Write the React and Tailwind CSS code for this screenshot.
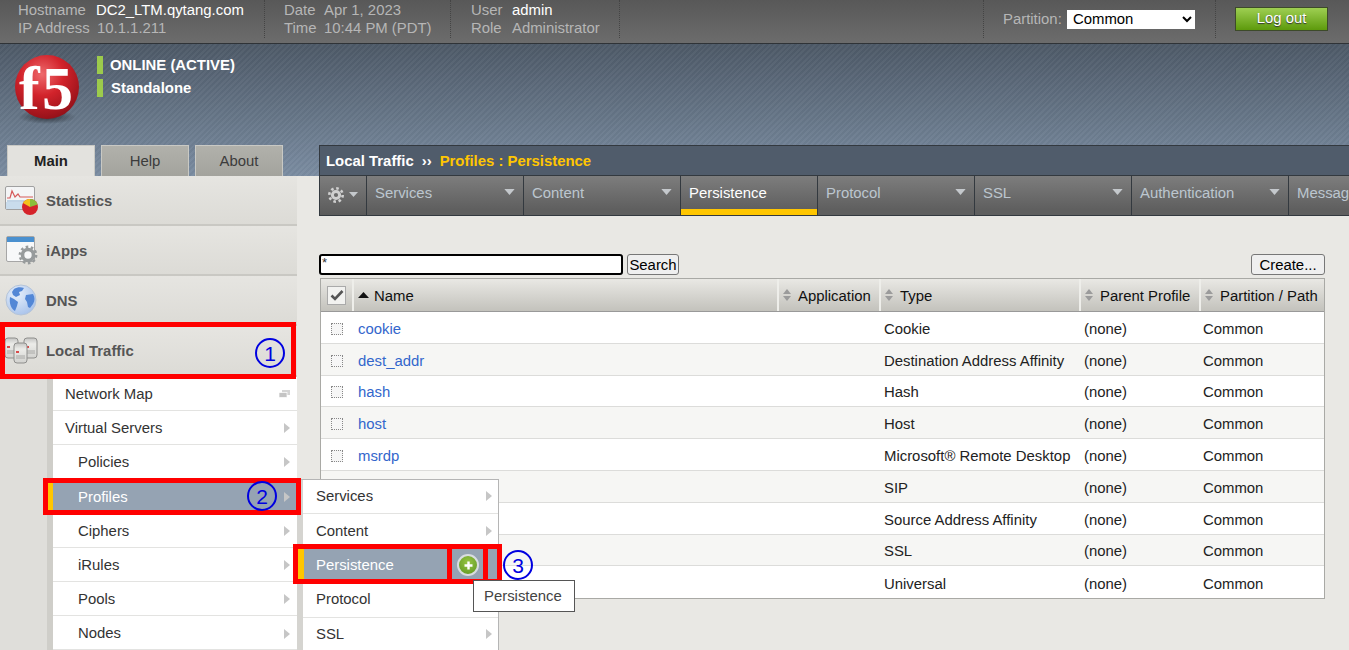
import React from "react";

const FONT = "font-['Liberation_Sans',Arial,sans-serif]";

function Caret({ className = "" }) {
  return (
    <svg width="12" height="7" viewBox="0 0 12 7" className={className}>
      <path d="M0 0h12L6 7z" fill="#c4c8cc" />
    </svg>
  );
}

function Arrow() {
  return (
    <svg width="7" height="10" viewBox="0 0 7 10" className="shrink-0">
      <path d="M1 0l6 5-6 5z" fill="#c6c6c6" />
    </svg>
  );
}

function SortIcon() {
  return (
    <svg width="10" height="12" viewBox="0 0 10 12" className="shrink-0">
      <path d="M5 0l4 5H1z" fill="#9b9b9b" />
      <path d="M5 12L1 7h8z" fill="#9b9b9b" />
    </svg>
  );
}

function F5Logo() {
  return (
    <svg width="68" height="70" viewBox="0 0 68 70">
      <defs>
        <radialGradient id="f5r" cx="0.42" cy="0.3" r="0.75">
          <stop offset="0" stopColor="#ee6a6c" />
          <stop offset="0.45" stopColor="#d2232b" />
          <stop offset="1" stopColor="#8e0f17" />
        </radialGradient>
        <radialGradient id="f5s" cx="0.5" cy="0.5" r="0.5">
          <stop offset="0" stopColor="#1c2025" stopOpacity="0.75" />
          <stop offset="1" stopColor="#1c2025" stopOpacity="0" />
        </radialGradient>
      </defs>
      <ellipse cx="33" cy="62" rx="29" ry="7" fill="url(#f5s)" />
      <circle cx="33" cy="32" r="32" fill="url(#f5r)" />
      <text x="5" y="54" fontFamily="'Liberation Serif',serif" fontWeight="700" fontSize="62" fill="#fff">f</text>
      <text x="28" y="54" fontFamily="'Liberation Serif',serif" fontWeight="700" fontSize="62" fill="#fff">5</text>
    </svg>
  );
}

function StatsIcon() {
  return (
    <svg width="34" height="30" viewBox="0 0 34 30">
      <rect x="1.5" y="1.5" width="29" height="23" rx="1.5" fill="#f4f5f6" stroke="#a0a0a0" />
      <rect x="2" y="17" width="28" height="7" fill="#c9dcec" />
      <path d="M3 13h3l2-7 3 6 3-3 2 3h13" fill="none" stroke="#d65a5a" strokeWidth="1.2" />
      <path d="M3 16h26" stroke="#8fb4d6" strokeWidth="1" />
      <circle cx="26" cy="22" r="8" fill="#d5232a" />
      <path d="M26 22V14a8 8 0 0 1 7.6 5.5z" fill="#8bbf3a" />
      <path d="M26 22l-7-3.9A8 8 0 0 1 26 14z" fill="#f3c21c" />
    </svg>
  );
}

function IAppsIcon() {
  return (
    <svg width="34" height="30" viewBox="0 0 34 30">
      <rect x="2.5" y="1.5" width="28" height="25" rx="1.5" fill="#f7f8f9" stroke="#a6a6a6" />
      <rect x="3" y="2" width="27" height="5" fill="#4a90cf" />
      <circle cx="24" cy="20" r="5.5" fill="none" stroke="#979b9c" strokeWidth="3.6" />
      <circle cx="24" cy="20" r="8.2" fill="none" stroke="#979b9c" strokeWidth="2.4" strokeDasharray="2.6 2.55" />
    </svg>
  );
}

function GlobeIcon() {
  return (
    <svg width="32" height="32" viewBox="0 0 32 32">
      <defs>
        <radialGradient id="gl" cx="0.35" cy="0.3" r="0.8">
          <stop offset="0" stopColor="#e6effb" />
          <stop offset="1" stopColor="#a5c0ea" />
        </radialGradient>
      </defs>
      <circle cx="16" cy="16" r="15" fill="url(#gl)" stroke="#b5c4d8" />
      <path d="M9 5c3-2 7-2 10-1l-2 3-3 1 1 3-4 2-3-2-1-3zM21 11l7-1c2 3 2 7 0 10l-3 4-2-1-1-5-2-3zM5 13l4 2 4 3-1 4-2 5c-4-2-6-8-5-14z" fill="#5387d6" />
    </svg>
  );
}

function ServersIcon() {
  return (
    <svg width="34" height="28" viewBox="0 0 34 28">
      <defs>
        <linearGradient id="srv" x1="0" y1="0" x2="0" y2="1">
          <stop offset="0" stopColor="#c4c4c2" />
          <stop offset="0.3" stopColor="#ecece9" />
          <stop offset="1" stopColor="#d2d2cf" />
        </linearGradient>
      </defs>
      {[[1, 1], [20, 1], [10, 6]].map(([x, y], i) => (
        <g key={i}>
          <rect x={x} y={y} width="13" height="20" rx="3" fill="url(#srv)" stroke="#8f8f8d" />
          <rect x={x + 2} y={y + 8} width="3" height="2" fill="#d84a4a" />
          <path d={`M${x + 2} ${y + 13}h9M${x + 2} ${y + 15}h9`} stroke="#a8a8a6" />
        </g>
      ))}
    </svg>
  );
}

function TopBar() {
  const label = "text-[#b6b6b6]";
  return (
    <div className="flex h-[44px] items-stretch border-b border-[#2f3337] bg-[linear-gradient(#585858,#6c6c6c)] pb-[5px] text-[14.9px] leading-[18px]">
      <div className="w-[265px] border-r border-dotted border-[#444] pl-[18px] pt-[1px]">
        <div className="flex"><span className={`w-[78px] ${label}`}>Hostname</span><span className="text-white">DC2_LTM.qytang.com</span></div>
        <div className="flex"><span className={`w-[79px] ${label}`}>IP Address</span><span className={label}>10.1.1.211</span></div>
      </div>
      <div className="w-[186px] border-r border-dotted border-[#444] pl-[19px] pt-[1px]">
        <div className="flex"><span className={`w-[40px] ${label}`}>Date</span><span className={label}>Apr 1, 2023</span></div>
        <div className="flex"><span className={`w-[40px] ${label}`}>Time</span><span className={label}>10:44 PM (PDT)</span></div>
      </div>
      <div className="w-[169px] border-r border-dotted border-[#444] pl-[20px] pt-[1px]">
        <div className="flex"><span className={`w-[41px] ${label}`}>User</span><span className="text-white">admin</span></div>
        <div className="flex"><span className={`w-[41px] ${label}`}>Role</span><span className={label}>Administrator</span></div>
      </div>
      <div className="flex-1 border-r border-dotted border-[#444]" style={{ maxWidth: 364 }} />
      <div className="flex w-[232px] items-center border-r border-dotted border-[#444] pl-[19px]">
        <span className={`w-[64px] whitespace-nowrap ${label}`}>Partition:</span>
        <select className="h-[19px] w-[128px] bg-white pl-[2px] text-[14.9px] text-black" defaultValue="Common">
          <option>Common</option>
        </select>
      </div>
      <div className="flex items-center pl-[19px]">
        <div className="flex h-[24px] w-[93px] items-center justify-center border border-[#3d4a2a] bg-[linear-gradient(#9ecf52,#5d9a0c)] pb-[2px] text-white [text-shadow:0_1px_1px_#333]">Log out</div>
      </div>
    </div>
  );
}

function Tab({ children, active }) {
  return (
    <div className={`flex h-[31px] w-[88px] items-center justify-center border-t border-x border-[#c9c9c4] text-[14.9px] ${active ? "bg-[#e3e2de] font-bold text-[#222]" : "bg-[linear-gradient(#b1b1ab,#a3a39d)] text-[#3c3c3c]"}`}>
      {children}
    </div>
  );
}

function Banner() {
  return (
    <div className="flex h-[132px] flex-col justify-between bg-[repeating-linear-gradient(135deg,rgba(255,255,255,0.035)_0_2px,rgba(0,0,0,0.02)_2px_4px),linear-gradient(#4d5967,#7a8ca1)]">
      <div className="flex pl-[14px] pt-[11px]">
        <F5Logo />
        <div className="ml-[15px] flex flex-col gap-[4px] text-[14.9px] font-bold leading-[18px] text-white">
          <div className="flex items-center gap-[7px]"><span className="h-[18px] w-[6px] bg-[#9ccb4c]" /><span className="pt-[1px]">ONLINE (ACTIVE)</span></div>
          <div className="flex items-center gap-[8px]"><span className="h-[18px] w-[6px] bg-[#9ccb4c]" /><span className="pt-[1px]">Standalone</span></div>
        </div>
      </div>
      <div className="flex items-end">
        <div className="flex w-[319px] gap-[6px] pl-[7px]">
          <Tab active>Main</Tab>
          <Tab>Help</Tab>
          <Tab>About</Tab>
        </div>
        <div className="flex h-[31px] flex-1 items-center gap-[8px] border-y border-l border-[#33393f] bg-[#505c6b] pl-[6px] pt-[2px] text-[14.9px] font-bold text-white">
          <span>Local Traffic</span>
          <span>››</span>
          <span className="text-[#ffc600]">Profiles : Persistence</span>
        </div>
      </div>
    </div>
  );
}

function SideHead({ icon, children, h = "h-[50px]" }) {
  return (
    <div className={`flex ${h} items-center gap-[8px] border-b-2 border-[#c9c8c3] bg-[linear-gradient(#e6e5e1,#dcdbd6)] pl-[4px] text-[14.9px] font-bold text-[#555]`}>
      <div className="flex w-[34px] justify-center">{icon}</div>
      <span className="pt-[2px]">{children}</span>
    </div>
  );
}

const subItems = [
  ["Network Map", false, "h-[34px] pt-[1px]", "pl-[12px]"],
  ["Virtual Servers", true, "h-[34px] pt-[1px]", "pl-[12px]"],
  ["Policies", true, "h-[34px] pt-[1px]", "pl-[25px]"],
  ["Profiles", true, "h-[35px] pt-[2px]", "pl-[25px]"],
  ["Ciphers", true, "h-[34px] pt-[1px]", "pl-[25px]"],
  ["iRules", true, "h-[34px] pt-[1px]", "pl-[25px]"],
  ["Pools", true, "h-[34px] pt-[1px]", "pl-[25px]"],
  ["Nodes", true, "h-[34px] pt-[2px]", "pl-[25px]"],
];

function Sidebar() {
  return (
    <div className="w-[297px] shrink-0 bg-[#dfdeda]">
      <SideHead icon={<StatsIcon />}>Statistics</SideHead>
      <SideHead icon={<IAppsIcon />}>iApps</SideHead>
      <SideHead icon={<GlobeIcon />}>DNS</SideHead>
      <SideHead icon={<ServersIcon />} h="h-[51px]">Local Traffic</SideHead>
      <div className="ml-[47px] border-l-[6px] border-[#cfcec9]">
        {subItems.map(([t, arrow, h, pl]) => {
          const on = t === "Profiles";
          return (
            <div key={t} className={`flex ${h} items-center justify-between border-b border-[#e3e3e1] ${pl} pr-[7px] text-[14.9px] ${on ? "bg-[#95a3b3] text-white" : "bg-white text-[#333]"}`}>
              <span>{t}</span>
              {arrow ? <Arrow /> : (
                <svg width="11" height="8" viewBox="0 0 11 8"><rect x="3" y="0" width="8" height="5" fill="#d4d4d4" /><rect x="0" y="2.5" width="8" height="5" fill="#c4c4c4" stroke="#fff" strokeWidth="0.7" /></svg>
              )}
            </div>
          );
        })}
      </div>
    </div>
  );
}

const navItems = [
  ["Services", "w-[157px]"],
  ["Content", "w-[157px]"],
  ["Persistence", "w-[137px]"],
  ["Protocol", "w-[157px]"],
  ["SSL", "w-[157px]"],
  ["Authentication", "w-[157px]"],
  ["Message Routing", "w-[157px]"],
];

function NavStrip() {
  return (
    <div className="flex h-[40px] overflow-hidden border-b border-l border-[#33393f] bg-[linear-gradient(#7d7d7d,#5a5a5a)] text-[14.9px]">
      <div className="flex w-[47px] shrink-0 items-center justify-center gap-[5px] border-r border-[#33393f] pb-[2px]">
        <svg width="16" height="16" viewBox="0 0 16 16" fill="none">
          <circle cx="8" cy="8" r="3.6" stroke="#d0d0d0" strokeWidth="3" />
          <circle cx="8" cy="8" r="6.7" stroke="#d0d0d0" strokeWidth="2.6" strokeDasharray="2.6 2.66" />
        </svg>
        <svg width="9" height="5" viewBox="0 0 9 5"><path d="M0 0h9L4.5 5z" fill="#c4c8cc" /></svg>
      </div>
      {navItems.map(([t, w]) => {
        const on = t === "Persistence";
        return (
          <div key={t} className={`relative flex ${w} shrink-0 items-start border-r border-[#33393f] pl-[8px] pt-[8px] leading-[18px] ${on ? "text-white" : "text-[#bcc6cf]"}`}>
            <span className="whitespace-nowrap">{t}</span>
            {!on && <Caret className="absolute right-[8px] top-[13px] h-[6px] w-[11px]" />}
            <span className={`absolute inset-x-0 bottom-0 h-[6px] ${on ? "bg-[#ffc600]" : "bg-[#5f5f5f]"}`} />
          </div>
        );
      })}
    </div>
  );
}

// The names of the last four rows lie under the open menu in the picture.
const rows = [
  ["cookie", "Cookie"],
  ["dest_addr", "Destination Address Affinity"],
  ["hash", "Hash"],
  ["host", "Host"],
  ["msrdp", "Microsoft® Remote Desktop"],
  ["", "SIP"],
  ["", "Source Address Affinity"],
  ["", "SSL"],
  ["", "Universal"],
];

const GRID = "grid grid-cols-[31px_425px_102px_200px_120px_1fr]";

function HeadCell({ children, up }) {
  return (
    <div className="flex items-center gap-[6px] border-l-2 border-[#eeeeea] pl-[3px] text-[14.9px] text-[#111]">
      {up ? (
        <svg width="11" height="6" viewBox="0 0 11 6" className="ml-[1px] mr-[-1px]"><path d="M5.5 0L11 6H0z" fill="#111" /></svg>
      ) : <SortIcon />}
      <span className="whitespace-nowrap pt-[2px]">{children}</span>
    </div>
  );
}

function Table() {
  return (
    <div className="ml-[1px] mr-[24px] mt-[3px] border border-[#a9a9a5] bg-white text-[14.9px]">
      <div className={`${GRID} h-[33px] border-b border-[#999] bg-[linear-gradient(#e9e8e4,#c3c2bc)]`}>
        <div className="flex items-center justify-center">
          <span className="flex h-[19px] w-[19px] items-center justify-center border border-[#aaa] bg-[#f2f2f0]">
            <svg width="14" height="12" viewBox="0 0 14 12"><path d="M1.5 6.5l3.5 3.5L12.5 2" fill="none" stroke="#555" strokeWidth="2.6" /></svg>
          </span>
        </div>
        <HeadCell up>Name</HeadCell>
        <HeadCell>Application</HeadCell>
        <HeadCell>Type</HeadCell>
        <HeadCell>Parent Profile</HeadCell>
        <HeadCell>Partition / Path</HeadCell>
      </div>
      {rows.map(([n, t], i) => (
        <div key={t} className={`${GRID} h-[31.8px] items-center border-b border-[#dcdcda] pt-[3px] last:border-b-0 ${i % 2 ? "bg-[#f6f6f4]" : "bg-white"} text-[#222]`}>
          <div className="flex justify-center">
            <span className="ml-[1px] h-[12px] w-[12px] border border-dotted border-[#888] bg-[#f6f6f6]" />
          </div>
          <div className="pl-[6px] text-[#3366cc]">{n}</div>
          <div />
          <div className="whitespace-nowrap pl-[5px]">{t}</div>
          <div className="pl-[5px]">(none)</div>
          <div className="pl-[4px]">Common</div>
        </div>
      ))}
    </div>
  );
}

function Main() {
  return (
    <div className="min-w-0 flex-1 bg-[#e9e8e4] pl-[22px]">
      <NavStrip />
      <div className="mt-[38px] flex justify-between pr-[24px]">
        <div className="flex gap-[4px]">
          <input
            readOnly
            value="*"
            className="h-[21px] w-[304px] rounded-[3px] border-2 border-black bg-white px-[1px] pb-[5px] text-[13px] leading-[13px] text-[#333] outline-none"
          />
          <div className="flex h-[21px] w-[52px] items-center justify-center rounded-[3px] border border-[#777] bg-[#efefef] pt-[1px] text-[14.9px] text-black">Search</div>
        </div>
        <div className="flex h-[21px] w-[74px] items-center justify-center rounded-[3px] border border-[#777] bg-[#efefef] pt-[1px] text-[14.9px] text-black">Create...</div>
      </div>
      <Table />
    </div>
  );
}

const flyout = [
  ["Services", true, "pb-[2px]"],
  ["Content", true, ""],
  ["Persistence", false, ""],
  ["Protocol", true, "pb-[2px]"],
  ["SSL", true, ""],
];

function Flyout() {
  return (
    <div className="absolute left-[297px] top-[479px] w-[202px] border-r border-t border-[#b5b5b5] border-l-[6px] border-l-[#d5d4d0] bg-white">
      {flyout.map(([t, arrow, pad]) => {
        const on = t === "Persistence";
        return (
          <div key={t} className={`flex h-[34.4px] items-center justify-between border-b border-[#e3e3e1] pl-[13px] pr-[6px] text-[14.9px] ${pad} ${on ? "bg-[#95a3b3] text-white" : "text-[#333]"}`}>
            <span>{t}</span>
            {arrow && <Arrow />}
          </div>
        );
      })}
    </div>
  );
}

function Circled({ n, className }) {
  return (
    <div className={`absolute flex h-[30px] w-[30px] items-center justify-center rounded-full border-[2.5px] border-[#0000e0] text-[21px] leading-none text-[#0000e0] ${className}`}>{n}</div>
  );
}

function Annotations() {
  const box = "absolute border-[5px] border-[#ff0000]";
  return (
    <>
      <div className="absolute left-[48px] top-[482px] h-[28px] w-[5px] bg-[#ffc600]" />
      <div className="absolute left-[298px] top-[549px] h-[30px] w-[6px] bg-[#ffc600]" />
      <div className={`${box} left-0 top-[322px] h-[57px] w-[296px]`} />
      <div className={`${box} left-[43px] top-[478px] h-[37px] w-[258px]`} />
      <div className={`${box} left-[293px] top-[544px] h-[40px] w-[209px]`} />
      <div className={`${box} left-[447px] top-[544px] h-[40px] w-[41px]`} />
      <div className="absolute left-[457px] top-[554px] flex h-[22px] w-[22px] items-center justify-center rounded-full border-2 border-[#d9dde0] bg-[radial-gradient(circle_at_50%_35%,#96c544,#5d9420)]">
        <svg width="9" height="9" viewBox="0 0 9 9"><path d="M4.5 0.5v8M0.5 4.5h8" stroke="#fff" strokeWidth="2.4" /></svg>
      </div>
      <Circled n="1" className="left-[255px] top-[338px]" />
      <Circled n="2" className="left-[247px] top-[481px]" />
      <Circled n="3" className="left-[503px] top-[550px]" />
      <div className="absolute left-[473px] top-[580px] flex h-[32px] w-[102px] items-center border border-[#555] bg-white pl-[10px] text-[14.9px] text-[#444]">Persistence</div>
    </>
  );
}

export default function App() {
  return (
    <div className={`relative h-[650px] w-full overflow-hidden bg-[#e9e8e4] ${FONT}`}>
      <TopBar />
      <Banner />
      <div className="flex h-[474px]">
        <Sidebar />
        <Main />
      </div>
      <Flyout />
      <Annotations />
    </div>
  );
}
